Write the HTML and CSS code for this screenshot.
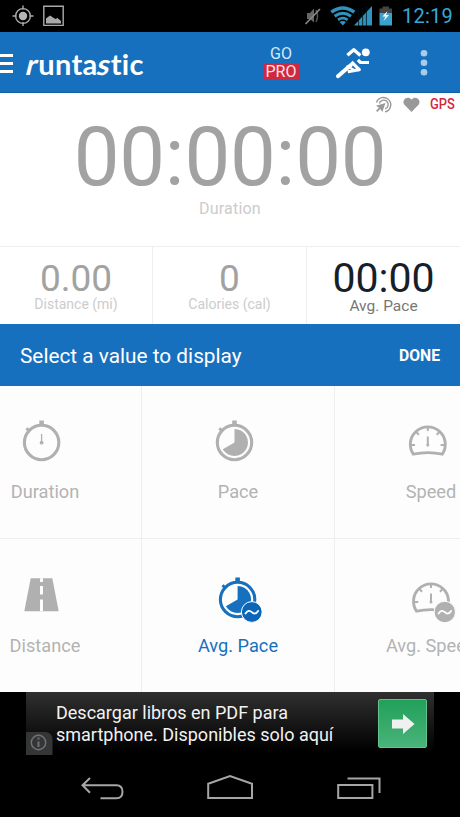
FILE: index.html
```html
<!DOCTYPE html>
<html lang="en">
<head>
<meta charset="utf-8">
<title>Runtastic</title>
<link rel="stylesheet" href="styles.css">
</head>
<body>
<div class="phone">
  <div class="status">
    <svg class="status-left" viewBox="0 0 70 32">
      <g fill="none" stroke="#aaa" stroke-width="1.4"><circle cx="23" cy="16" r="7.4"/><path d="M23 5.500v4M23 22v4M12.500 16h4M29.500 16h4"/><path d="M43.800 6.200h19.400v19.200H43.800z"/></g>
      <circle cx="23" cy="16" r="4.200" fill="#b5b5b5"/>
      <path d="M46 23.500v-5l4-3 3 2 2.500 1.500 2-1 3.500 3v2.500z" fill="#aaa"/>
    </svg>
    <div class="status-right">
      <svg class="status-icons" viewBox="300 0 96 32">
        <path d="M307 13h3l4-4.500v14L310 19h-3z" fill="#666"/><path d="M316 10q3 6 0 12" fill="none" stroke="#555" stroke-width="1.500"/><path d="M305.500 24L320 9" stroke="#8a8a8a" stroke-width="1.600"/>
        <g fill="none" stroke="#2f93bd"><path d="M331.300 12.200Q342.800 3.800 354.300 12.200" stroke-width="3.400"/><path d="M334.600 16.200Q342.800 10.300 351 16.200" stroke-width="3"/><path d="M338 19.900Q342.800 16.500 347.600 19.900" stroke-width="2.700"/></g>
        <path d="M339.600 22q3.200-2 6.400 0l-3.200 3.500z" fill="#2f93bd"/>
        <path d="M354 25.500L372 6v19.500z" fill="#2f93bd"/>
        <path d="M358.600 8v18M362.600 8v18M366.400 6v20" stroke="#03151d" stroke-width=".8"/>
        <path d="M379.500 8.500h3v-2h6.500v2h3v5h-12.500z" fill="#444"/><path d="M379.500 13h12.500v12.500h-12.500z" fill="#3ba2cc"/><path d="M387.500 11l-5 5.500h3l-2 4.500 5.500-6h-3z" fill="#fff"/>
      </svg>
      <span class="clock">12:19</span>
    </div>
  </div>

  <header class="header">
    <div class="brand">
      <span class="burger"></span>
      <span class="logo"><i>r</i>unta<i>s</i>tic</span>
    </div>
    <div class="gopro"><span>GO</span><b>PRO</b></div>
    <svg class="runner" viewBox="332 43 42 38">
      <g fill="none" stroke="#fff" stroke-width="3.400" stroke-linejoin="round"><path d="M347.400 55.300L353.800 49.800l6.600 5.700"/><path d="M351.500 61.800l7.800 7.800-11.500 2.200" stroke-width="3.200"/><path d="M337.900 76.300l13-11.300" stroke-linecap="round" stroke-width="3.900"/><path d="M346.500 66l7 3.500" stroke-width="2"/><path d="M369 62.500h-8.500l-2.600-2.600" stroke-width="3.200"/></g>
      <circle cx="365.800" cy="52.300" r="3.900" fill="#fff"/>
    </svg>
    <svg class="more" viewBox="0 0 8 28"><g fill="#a8cdec"><circle cx="4" cy="4.300" r="3.300"/><circle cx="4" cy="13.800" r="3.300"/><circle cx="4" cy="23.300" r="3.300"/></g></svg>
  </header>

  <section class="main">
    <div class="sensors">
      <svg class="sensor-icons" viewBox="374 94 50 20">
        <g fill="none" stroke="#999" stroke-width="1.400"><path d="M376.500 102.500a7.300 7.300 0 1 1 8.500 9.400"/><path d="M379.300 103.500a4.500 4.500 0 1 1 5.800 5.400"/></g>
        <path d="M385.500 103l-3.200 9-2-3-3 3-1.300-1.300 3-3-3-2z" fill="#999"/>
        <path d="M411.500 112l-7.300-7.500c-3-4.500 3.500-9.700 7.300-4.800 3.800-4.900 10.300.3 7.300 4.800z" fill="#999"/>
      </svg>
      <span class="gps">GPS</span>
    </div>
    <div class="time">00:00:00</div>
    <div class="time-label">Duration</div>
  </section>

  <section class="stats">
    <div class="stat"><span class="num">0.00</span><span class="cap">Distance (mi)</span></div>
    <div class="stat"><span class="num">0</span><span class="cap">Calories (cal)</span></div>
    <div class="stat active"><span class="num">00:00</span><span class="cap">Avg. Pace</span></div>
  </section>

  <div class="select"><span class="select-title">Select a value to display</span><span class="done">DONE</span></div>

  <section class="grid">
    <div class="cell">
      <svg class="icon" viewBox="15 411 60 60"><g fill="none" stroke="#b0b0b0"><circle cx="41.600" cy="442.500" r="17.200" stroke-width="3.100"/><path d="M41.600 434v9" stroke-width="1.300"/><path d="M41.600 420.500v5" stroke-width="4.600"/><path d="M26.500 428.300l3 3" stroke-width="3"/></g><circle cx="41.600" cy="442.700" r="1.900" fill="#b0b0b0"/></svg>
      <span>Duration</span>
    </div>
    <div class="cell">
      <svg class="icon" viewBox="208 411 60 60"><g fill="none" stroke="#b0b0b0"><circle cx="234.500" cy="442.500" r="17.200" stroke-width="3.100"/><path d="M234.500 420.500v5" stroke-width="4.600"/><path d="M219.400 428.300l3 3" stroke-width="3"/></g><path d="M234.500 442.500V429a13.500 13.500 0 1 1-11.700 20.250z" fill="#b0b0b0"/></svg>
      <span>Pace</span>
    </div>
    <div class="cell">
      <svg class="icon" viewBox="401 411 60 60"><g fill="none" stroke="#b0b0b0"><path d="M413.300 454.200a17.500 17.500 0 1 1 29 0q-14.500-3.200-29 0z" stroke-width="2.900"/><path d="M427.800 436.500v9" stroke-width="2"/><path d="M427.800 427v4M416.200 432l2.700 2.700M439.400 432l-2.700 2.700M411 445h4M444.600 445h-4" stroke-width="2"/></g><circle cx="427.800" cy="445" r="1.500" fill="#b0b0b0"/></svg>
      <span>Speed</span>
    </div>
    <div class="cell">
      <svg class="icon" viewBox="15 565 60 60"><path d="M30.700 578.300h21.600l6.400 33H24.300z" fill="#b0b0b0"/><path d="M41.500 578.300v3.700M41.500 586v8.500M41.500 599.500v11.800" stroke="#fff" stroke-width="2.900"/></svg>
      <span>Distance</span>
    </div>
    <div class="cell chosen">
      <svg class="icon" viewBox="208 565 60 60"><g fill="none" stroke="#1770be"><circle cx="237.600" cy="599.500" r="17.200" stroke-width="3.100"/><path d="M237.600 577.500v5" stroke-width="4.600"/><path d="M222.500 585.300l3 3" stroke-width="3"/></g><path d="M237.600 599.500V586a13.500 13.500 0 1 1-11.700 20.250z" fill="#1770be"/><circle cx="251.800" cy="612" r="10.400" fill="#0c66b7" stroke="#fff" stroke-width="1"/><path d="M245.500 613.500q3-4.500 6.300-1.300t6.300-1.300" fill="none" stroke="#fff" stroke-width="1.800" stroke-linecap="round"/></svg>
      <span>Avg. Pace</span>
    </div>
    <div class="cell">
      <svg class="icon" viewBox="401 565 60 60"><g fill="none" stroke="#b0b0b0"><path d="M416.500 611.200a17.500 17.500 0 1 1 29 0q-14.500-3.200-29 0z" stroke-width="2.900"/><path d="M431 593.500v9" stroke-width="2"/><path d="M431 584v4M419.400 589l2.700 2.700M442.600 589l-2.700 2.700M414.200 602h4M447.800 602h-4" stroke-width="2"/></g><circle cx="431" cy="602" r="1.500" fill="#b0b0b0"/><circle cx="444.800" cy="612" r="10.700" fill="#b0b0b0" stroke="#fff" stroke-width="1"/><path d="M438.500 613.500q3-4.500 6.300-1.300t6.300-1.300" fill="none" stroke="#fff" stroke-width="1.800" stroke-linecap="round"/></svg>
      <span>Avg. Speed</span>
    </div>
  </section>

  <div class="ad">
    <svg class="info" viewBox="0 0 27 23"><path d="M0 0h20q6 1 6.500 7v16H0z" fill="#343536"/><circle cx="12.500" cy="10.500" r="7.200" fill="none" stroke="#737373" stroke-width="1.400"/><path d="M12.500 9.500v5.500M12.500 5.500v2" stroke="#737373" stroke-width="2"/></svg>
    <p class="ad-text"><span>Descargar libros en PDF para</span><br><span>smartphone. Disponibles solo aquí</span></p>
    <div class="go"><svg viewBox="0 0 24 22"><path d="M1 6.500h11V1l11.500 10L12 21v-5.500H1z" fill="#f0f0f0"/></svg></div>
  </div>

  <nav class="nav">
    <svg viewBox="0 755 460 62"><g fill="none" stroke="#a6a6a6" stroke-width="2"><path d="M90 778l-7.500 7.300 7.500 7.500M83 785.300h33.500q6 0 6 6.500t-6 6.500H100.500"/><path d="M208.200 798V783.800L230 776l22 7.800V798z"/><path d="M338.200 785h34.200v13h-34.200zM347.500 778.500h32V793"/></g></svg>
  </nav>
</div>
</body>
</html>
```
FILE: styles.css
```css
* { box-sizing: border-box; }
body { margin: 0; background: #000; font-family: Roboto, "Liberation Sans", sans-serif; }
svg { display: block; flex: none; }
.phone { width: 460px; height: 817px; display: flex; flex-direction: column; overflow: hidden; }
.phone > * { flex: none; }

.status { height: 32px; display: flex; justify-content: space-between; }
.status-left { width: 70px; height: 32px; }
.status-right { display: flex; width: 160px; }
.status-icons { width: 96px; height: 32px; }
.clock { margin-left: 6px; font-size: 20px; line-height: 33px; letter-spacing: .25px; color: #35a9d6; white-space: nowrap; }

.header { height: 61px; background: #1770be; border-bottom: 1px solid #1262aa; display: flex; align-items: center; }
.brand { width: 263px; display: flex; align-items: center; }
.burger { width: 13px; height: 19px; border-top: 3px solid #fff; border-bottom: 3px solid #fff; background: linear-gradient(#fff, #fff) 0 50% / 13px 3px no-repeat; background-origin: padding-box; margin-top: 3px; }
.logo { margin: 4px 0 0 14px; font: 700 29px/34px Lato, sans-serif; letter-spacing: .35px; color: #fff; white-space: nowrap; }
.logo i { display: inline-block; font-style: normal; transform: skewX(-14deg); }
.gopro { width: 36px; display: flex; flex-direction: column; align-items: center; font-size: 16px; color: #d5e8f8; line-height: 18px; }
.gopro b { width: 36px; height: 17px; background: #d2283f; font-weight: 400; text-align: center; color: #fbe3e6; line-height: 18px; }
.runner { width: 42px; height: 38px; margin-left: 33px; }
.more { width: 8px; height: 28px; margin-left: 46px; margin-top: 2px; }

.main { height: 153px; background: #fff; display: flex; flex-direction: column; align-items: center; }
.sensors { align-self: flex-end; display: flex; height: 21px; width: 86px; }
.sensor-icons { width: 50px; height: 20px; margin-top: 1px; }
.gps { margin-left: 6px; font: 500 15px/23px Roboto; color: #d2283f; transform: scaleX(.86); transform-origin: left; }
.time { font-size: 81.500px; line-height: 84px; margin-top: 1px; letter-spacing: -.2px; color: #a2a2a2; }
.time-label { font-size: 16px; line-height: 20px; color: #ccc; letter-spacing: .2px; }

.stats { height: 78px; background: #fff; border-top: 1px solid #eee; display: grid; grid-template-columns: 153px 154px 153px; }
.stat { display: flex; flex-direction: column; align-items: center; border-right: 1px solid #eee; }
.stat:last-child { border-right: 0; }
.num { font-size: 37px; line-height: 44px; margin-top: 10px; color: #a2a2a2; }
.cap { font-size: 14px; line-height: 16px; margin-top: -5px; color: #ccc; }
.active .num { font-size: 41px; margin-top: 9px; color: #15202b; }
.active .cap { font-size: 15.500px; color: #777; margin-top: -2px; }

.select { height: 62px; background: #1770be; color: #fff; display: flex; justify-content: space-between; align-items: center; padding: 1px 20px 0; }
.select-title { font-size: 20.800px; }
.done { font-size: 15.700px; font-weight: 700; }

.grid { height: 306px; background: #fdfdfd; display: grid; grid-template-columns: 193px 193px 193px; grid-template-rows: 153px 153px; margin-left: -51px; width: 579px; }
.cell { display: flex; flex-direction: column; align-items: center; border-right: 1px solid #eee; border-bottom: 1px solid #eee; padding-top: 25px; font-size: 18.200px; color: #b3b3b3; }
.cell span { line-height: 22px; margin-top: 10px; }
.icon { width: 60px; height: 60px; }
.cell:nth-child(n+4) { border-bottom: 0; padding-top: 26px; }
.chosen { color: #1770be; }

.ad { height: 63px; margin: 0 26px; background: linear-gradient(#303030, #000 95%); display: flex; }
.info { width: 27px; height: 23px; align-self: flex-end; }
.ad-text { margin: 10px 0 0 3px; width: 323px; font-size: 18px; line-height: 22px; color: #f2f2f2; white-space: nowrap; }
.go { width: 49px; height: 49px; margin: 7px 0 0; margin-left: -1px; background: linear-gradient(#22a05a, #49b37a); border: 1px solid #64c28e; border-radius: 2px; display: flex; align-items: center; justify-content: center; }
.go svg { width: 24px; height: 22px; }
.nav { height: 62px; }
.nav svg { width: 460px; height: 62px; }
```
